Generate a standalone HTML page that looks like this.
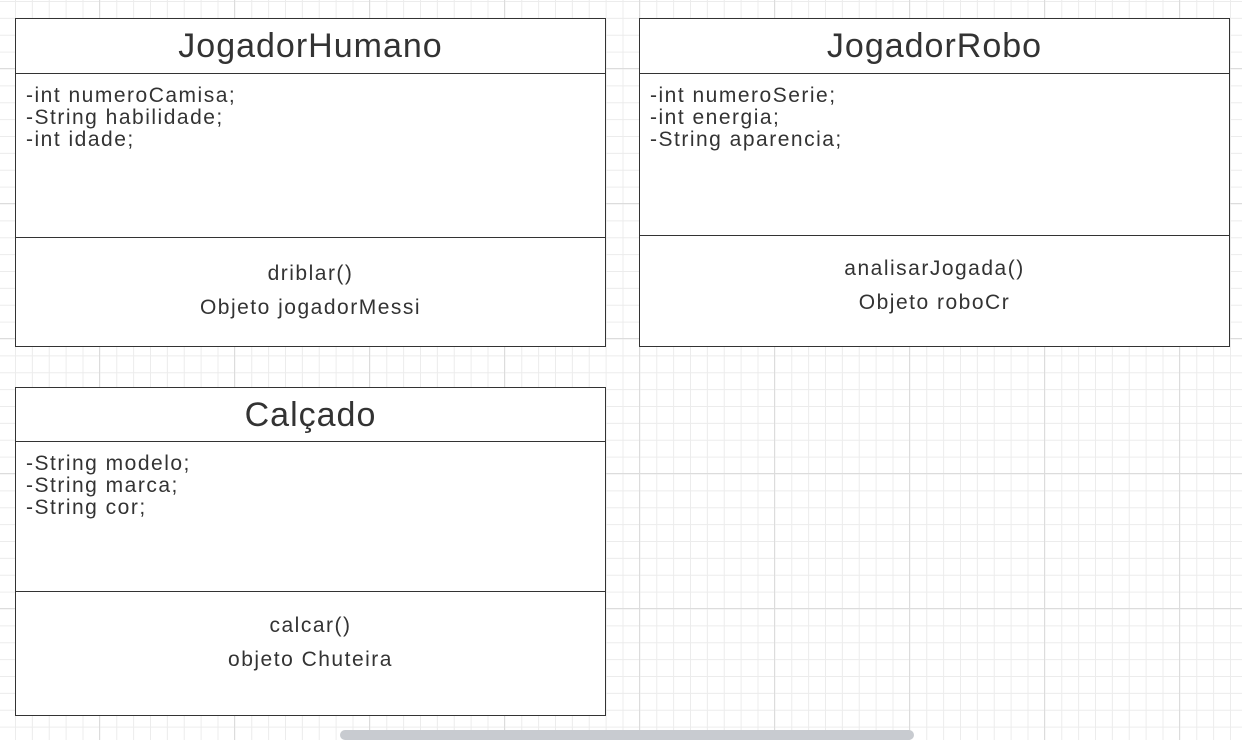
<!DOCTYPE html>
<html><head><meta charset="utf-8"><style>
html,body{margin:0;padding:0;}
body{width:1242px;height:736px;overflow:hidden;position:relative;background-color:#fff;
background-image:
linear-gradient(to right,#dcdcdc 1px,transparent 1px),
linear-gradient(to bottom,#dcdcdc 1px,transparent 1px),
linear-gradient(to right,#ececec 1px,transparent 1px),
linear-gradient(to bottom,#ececec 1px,transparent 1px);
background-size:135px 135px,135px 135px,16.875px 16.875px,16.875px 16.875px;
background-position:99px 68px,99px 68px,15px 1px,15px 1px;
font-family:"Liberation Sans",sans-serif;color:#333;}
.box{position:absolute;background:#fff;border:1.5px solid #333;box-sizing:border-box;}
.hd{position:absolute;left:0;right:0;top:0;border-bottom:1.5px solid #333;text-align:center;font-size:34px;letter-spacing:1px;box-sizing:border-box;}
.attr{position:absolute;left:10px;font-size:21px;letter-spacing:1.5px;line-height:22px;white-space:nowrap;}
.ops{position:absolute;left:0;right:0;bottom:0;border-top:1.5px solid #333;text-align:center;font-size:21px;letter-spacing:1.5px;line-height:34px;box-sizing:border-box;padding-top:19px;}
.sb{position:absolute;left:340px;top:730px;width:574px;height:10px;background:#c8cbd0;border-radius:5px;}
</style></head><body>
<div class="box" style="left:15px;top:18px;width:591px;height:329px;">
 <div class="hd" style="height:55px;line-height:54px;">JogadorHumano</div>
 <div class="attr" style="top:66px;">-int numeroCamisa;<br>-String habilidade;<br>-int idade;</div>
 <div class="ops" style="height:109px;">driblar()<br>Objeto jogadorMessi</div>
</div>
<div class="box" style="left:639px;top:18px;width:591px;height:329px;">
 <div class="hd" style="height:55px;line-height:54px;">JogadorRobo</div>
 <div class="attr" style="top:66px;">-int numeroSerie;<br>-int energia;<br>-String aparencia;</div>
 <div class="ops" style="height:111px;padding-top:16px;">analisarJogada()<br>Objeto roboCr</div>
</div>
<div class="box" style="left:15px;top:387px;width:591px;height:329px;">
 <div class="hd" style="height:54px;line-height:54px;">Calçado</div>
 <div class="attr" style="top:65px;">-String modelo;<br>-String marca;<br>-String cor;</div>
 <div class="ops" style="height:124px;padding-top:17px;">calcar()<br>objeto Chuteira</div>
</div>
<div class="sb"></div>
</body></html>
